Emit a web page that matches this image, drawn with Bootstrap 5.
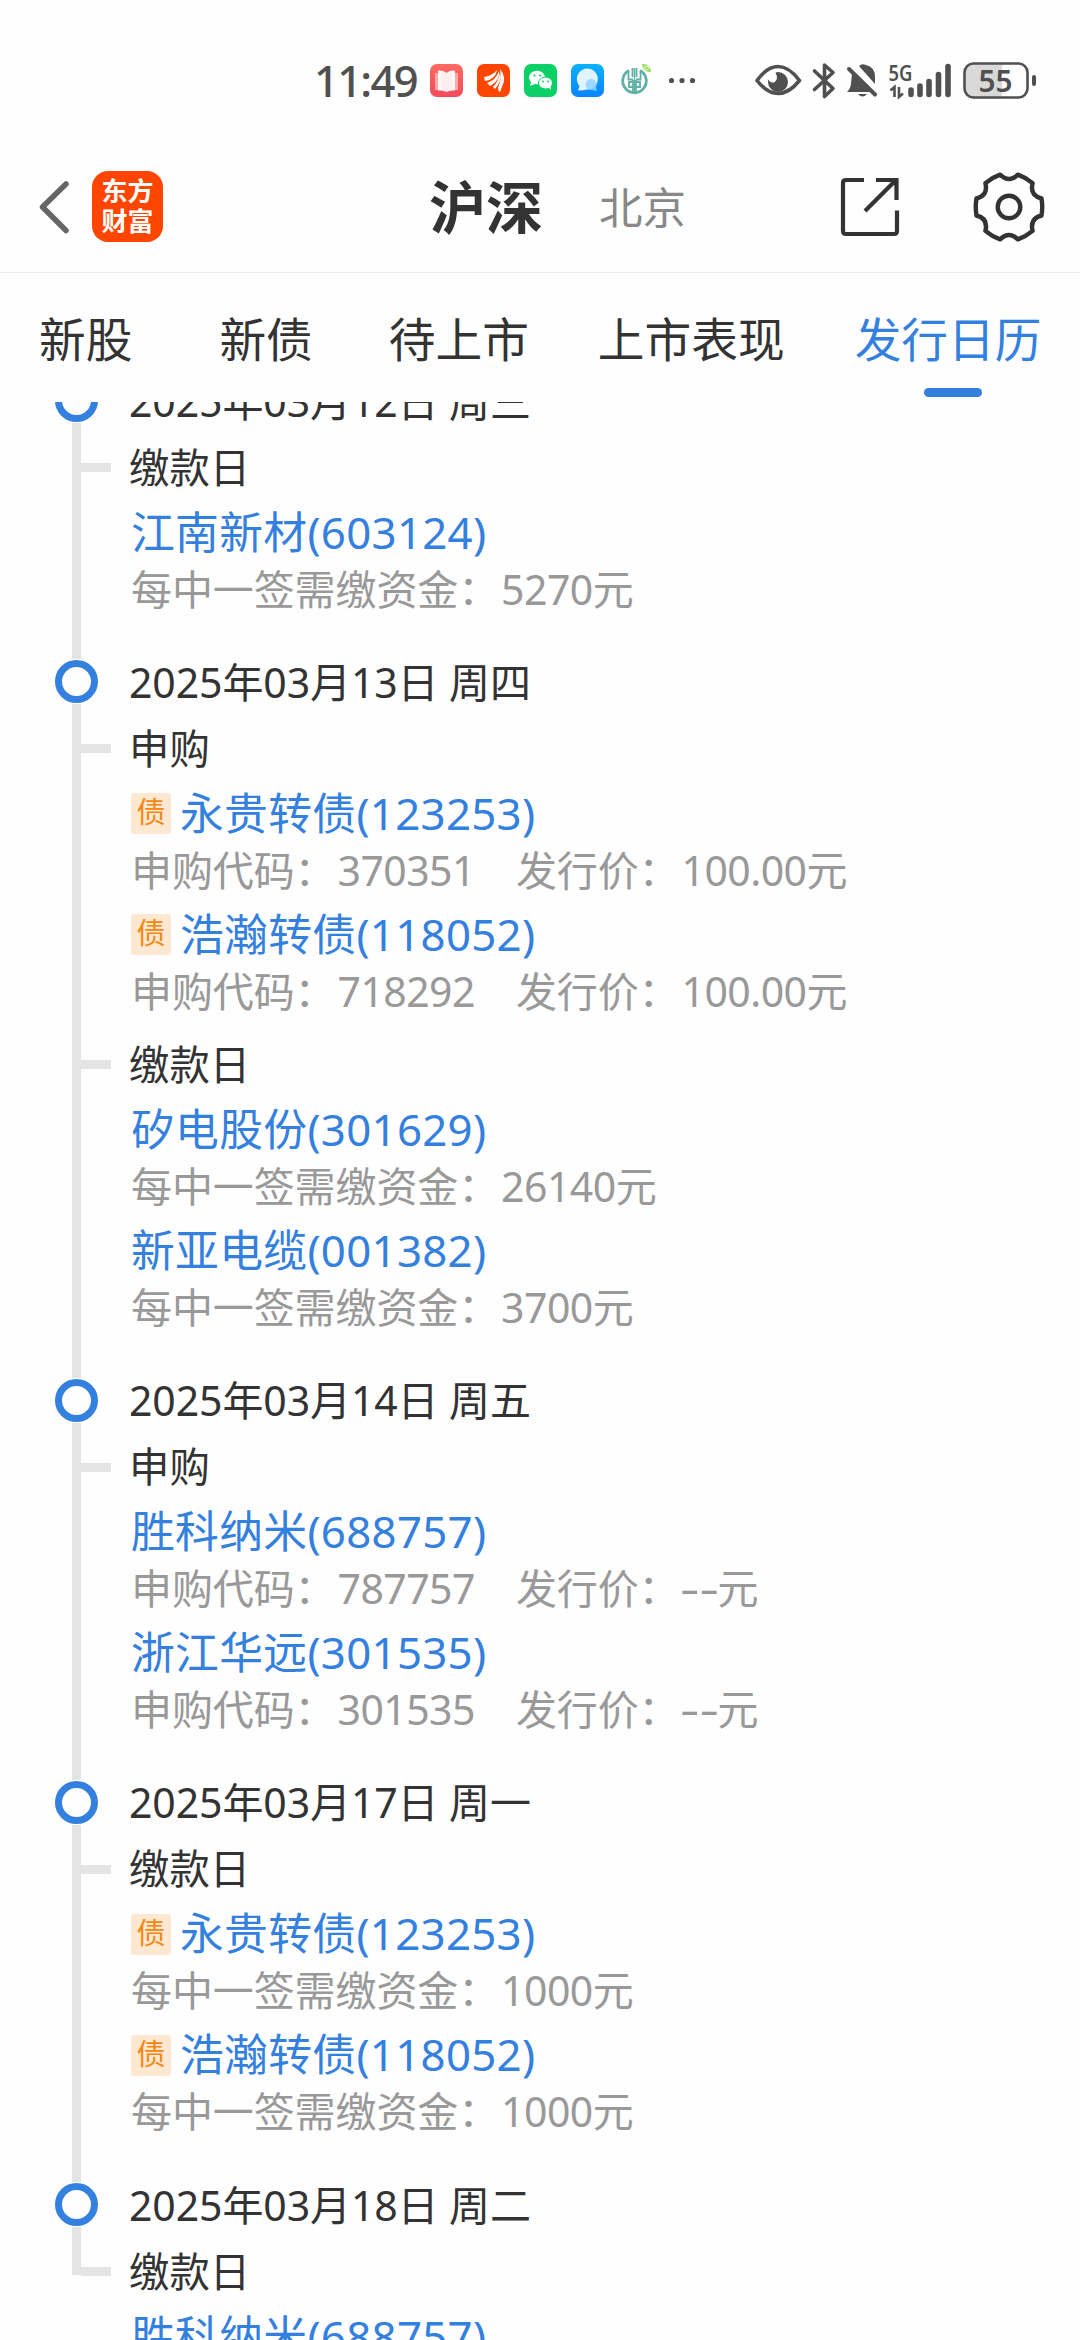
<!DOCTYPE html>
<html lang="zh-CN">
<head>
<meta charset="utf-8">
<meta name="viewport" content="width=device-width, initial-scale=1">
<title>发行日历</title>
<link href="https://cdn.jsdelivr.net/npm/bootstrap@5.3.0/dist/css/bootstrap.min.css" rel="stylesheet">
<style>
  :root { --ink: #333; --sub: #999; --brand: #3480de; --rail: #e4e4e4; }
  html, body { height: 2340px; overflow: hidden; }
  body { width: 1080px; background: #fefefe; color: var(--ink); font-family: "Noto Sans", "Noto Sans CJK SC", sans-serif; }
  svg { display: block; flex: none; }
  .statusbar { height: 150px; padding: 10px 44px 0 314px; color: #505050; }
  .clock { font-size: 43.5px; line-height: 60px; width: 116px; letter-spacing: -1.7px; font-weight: 500; }
  .topbar { height: 123px; border-bottom: 1px solid #ebebeb; padding: 0 34px 8px 38px; }
  .app-logo { width: 71px; height: 71px; border-radius: 16px; background: #ff4500; color: #fff; font: 700 26px/30px "Noto Sans CJK SC", sans-serif; margin: -2px 0 0 22px; padding-bottom: 2px; }
  .market-on { font-size: 57px; font-weight: 700; line-height: 70px; margin-left: 266px; }
  .market-off { font-size: 43.5px; line-height: 60px; color: #888; margin-left: 56px; }
  .gear { margin-left: 72px; }
  .tabs-row { height: 129px; padding: 0 39px; font-size: 46.7px; line-height: 60px; }
  .tabs-row a { color: var(--ink); text-decoration: none; padding-top: 36px; height: 129px; white-space: nowrap; }
  .tabs-row a.on { color: var(--brand); }
  .tab-line { width: 58px; height: 9px; border-radius: 5px; background: var(--brand); margin: 19px 0 0 69px; }
  .viewport-list { height: 1938px; overflow: hidden; }
  .timeline { margin-top: -34.5px; }
  .day { padding-left: 55px; }
  .rail { width: 43px; flex: none; }
  .rail i { width: 9px; background: var(--rail); }
  .rail .cap { height: 10.5px; }
  .rail b { width: 43px; height: 43px; border: 7px solid var(--brand); border-radius: 50%; margin: 1px 0; }
  .rail .stem { flex: 1; }
  .day.last .rail .stem { flex: none; height: 47.5px; }
  .day-body { padding-bottom: 26.3px; }
  .date { height: 66px; line-height: 66px; font-size: 41px; padding-left: 31px; white-space: pre; letter-spacing: -.1px; }
  .kind { height: 68px; font-size: 40.4px; line-height: 68px; }
  .kind::before { content: ""; width: 30px; height: 9px; background: var(--rail); margin: 0 18px 0 -17px; }
  .issue + .kind { margin-top: 6px; }
  .issue { height: 121px; padding-left: 33px; white-space: nowrap; }
  .issue-name { height: 64px; line-height: 61px; padding-bottom: 3px; font-size: 43.8px; color: var(--brand); letter-spacing: .3px; }
  .bond { width: 40px; height: 41px; border-radius: 3px; background: #ffe8d1; color: #f5870f; font-size: 29px; line-height: 38px; text-align: center; margin: 1px 9px 0 0; letter-spacing: 0; }
  .issue-info { height: 50px; line-height: 47px; font-size: 41px; color: var(--sub); letter-spacing: -.1px; }
  .num { margin-left: 2px; letter-spacing: -.55px; }
  .issue-info .price { margin-left: 41px; }
  .unset { display: inline-block; width: 38px; transform: scaleX(1.48); transform-origin: 0 50%; }
</style>
<script src="https://cdn.jsdelivr.net/npm/bootstrap@5.3.0/dist/js/bootstrap.bundle.min.js"></script>
</head>
<body>
<div class="statusbar d-flex align-items-center">
  <div class="clock">11:49</div>
  <svg width="270" height="40" viewBox="430 60 270 40">
    <defs>
      <linearGradient id="g1" x1="0" y1="0" x2="0" y2="1"><stop stop-color="#ff6a62"/><stop offset="1" stop-color="#f64a5c"/></linearGradient>
      <linearGradient id="g2" x1="0" y1="0" x2="0" y2="1"><stop stop-color="#0bb1ff"/><stop offset="1" stop-color="#0a84ff"/></linearGradient>
    </defs>
    <rect x="430" y="64" width="33" height="33" rx="7" fill="url(#g1)"/>
    <path d="M435 73h6v17h-6zM452 73h6v17h-6z" fill="#ffa9a9"/>
    <path d="M438 70.500q6-.5 8.500 2.500 2.500-3 8.500-2.500v20q-6-.5-8.500 1.500-2.500-2-8.500-1.500z" fill="#fff" opacity=".9"/>
    <rect x="477" y="64" width="33" height="33" rx="7" fill="#ff4500"/>
    <path d="M484 77q8-1 13-7-1 9-12 11zM487 83q9-3 12-12 2 9-9 15zM500 69q7 8 2 18l-2 5q-2-1-2-4 4-9 2-19zM493 87q6-6 7-15 2 10-5 17z" fill="#fff"/>
    <rect x="524" y="64" width="33" height="33" rx="7" fill="#0bd066"/>
    <ellipse cx="537" cy="77.500" rx="8" ry="6.800" fill="#fff"/><path d="M531 82l-1 4 5-2z" fill="#fff"/>
    <ellipse cx="545.500" cy="83" rx="7" ry="6" fill="#fff" stroke="#0bd066" stroke-width="1"/><path d="M548 87l3 3-.5-4z" fill="#fff"/>
    <g fill="#0bd066"><circle cx="534.500" cy="75.500" r="1.100"/><circle cx="540" cy="75.500" r="1.100"/><circle cx="543" cy="81.500" r=".9"/><circle cx="548" cy="81.500" r=".9"/></g>
    <rect x="571" y="64" width="33" height="33" rx="7" fill="url(#g2)"/>
    <path d="M578 90.500l1.500-4.500a10.500 10.500 0 1 1 7.500 3.500q-3 1-9 1z" fill="#e2f4ff"/>
    <path d="M597 90.500l-1-3.500a5.500 5.500 0 1 0-4 3q2 .5 5 .5z" fill="#8fd2ff" opacity=".85"/>
    <path d="M629 70.500a11.800 11.800 0 1 0 11 0" fill="none" stroke="#5fb0a5" stroke-width="2.800"/>
    <path d="M634.500 68v25" stroke="#5fb0a5" stroke-width="1.400"/>
    <path d="M628.500 71v8.500h4.500M640.500 71v8.500h-4.500M632.500 68v9M636.500 68v9M633 82h-4v5h4M636 82h4v5h-4M633 80v12M636 80v12" fill="none" stroke="#5fb0a5" stroke-width="1.800"/>
    <path d="M642 64q8-1 9 8-8 1-9-8z" fill="#9bdc5c"/><circle cx="646.500" cy="68" r="2" fill="none" stroke="#fff" stroke-width=".8"/>
    <g fill="#505050"><circle cx="671.500" cy="80.500" r="2.600"/><circle cx="682" cy="80.500" r="2.600"/><circle cx="692.500" cy="80.500" r="2.600"/></g>
  </svg>
  <svg class="ms-auto" width="284" height="40" viewBox="752 60 284 40" fill="none" stroke="#505050">
    <path d="M757 80.500Q767 66.500 778 66.500T799.500 80.500Q789 93.500 778 93.500T757 80.500z" stroke-width="3.600" stroke-linejoin="round"/>
    <path d="M778 72a10 10 0 1 1-10 10l.3-2.500q2.500 4.500 6.500 2.500 4-2.500.7-9.500z" fill="#505050" stroke="none"/>
    <path d="M814.500 71L833 88.500 824.500 96.500V65L833 72.500 814.500 89.500" stroke-width="3.600" stroke-linejoin="round" stroke-linecap="round"/>
    <path d="M852 74L870.500 92H847q4-4 4-9zM859 66q3-3 7-1 9 2 9 12v7z" fill="#505050" stroke="none"/>
    <path d="M858 94h9q-4.500 5-9 0z" fill="#505050" stroke="none"/>
    <path d="M849 69L875 94.500" stroke-width="4" stroke-linecap="round"/>
    <text x="888.500" y="80.500" font-size="21.500" font-weight="600" textLength="24" lengthAdjust="spacingAndGlyphs" fill="#505050" stroke="none" font-family="Noto Sans">5G</text>
    <path d="M890.500 90.500l4-3.500v10M899 87v10l4-3.500" stroke-width="2.600"/>
    <g stroke-width="5.600" stroke-linecap="round"><path d="M911 90v4.500M920 86v8.500M929 81.500v13M938.500 74.500v20M948 66.500v28"/></g>
    <path d="M974 64h28v33h-28q-9 0-9-9V73q0-9 9-9z" fill="#d9d9d9" stroke="none"/>
    <rect x="964.500" y="63.500" width="63" height="34" rx="9" stroke-width="2.600"/>
    <path d="M1034 77v7" stroke-width="4" stroke-linecap="round"/>
    <text x="995.500" y="91.500" font-size="30.500" font-weight="600" text-anchor="middle" textLength="34" lengthAdjust="spacingAndGlyphs" fill="#505050" stroke="none" font-family="Noto Sans">55</text>
  </svg>
</div>
<header class="topbar d-flex align-items-center">
  <svg width="32" height="56" viewBox="38 179 32 56" fill="none" stroke="#666" stroke-width="5.500" stroke-linecap="round" stroke-linejoin="round"><path d="M66 184L42.500 207 66 230.500"/></svg>
  <div class="app-logo d-flex flex-column align-items-center justify-content-center"><span>东方</span><span>财富</span></div>
  <div class="market-on">沪深</div>
  <div class="market-off">北京</div>
  <svg class="ms-auto" width="60" height="60" viewBox="840 177 60 60" fill="none" stroke="#333" stroke-width="4.200"><path d="M864 180h-18q-3 0-3 3v48q0 3 3 3h48q3 0 3-3v-20.500M876 180h20.500v20M865 211l31-31"/><path d="M888 179h10v10z" fill="#333" stroke="none"/></svg>
  <svg class="gear" width="74" height="74" viewBox="-37 -37 74 74" fill="none" stroke="#333" stroke-width="4.400" stroke-linejoin="round">
    <path d="M32.500 -8.500Q34 0 32.500 8.500Q20.500 11.500 23.600 23.900Q17 29.500 8.900 32.400Q0 23.500-8.900 32.400Q-17 29.500-23.600 23.900Q-20.500 11.500-32.500 8.500Q-34 0-32.500-8.500Q-20.500-11.500-23.600-23.900Q-17-29.500-8.900-32.400Q0-23.500 8.900-32.400Q17-29.500 23.600-23.900Q20.500-11.500 32.500-8.500z"/>
    <circle r="11.300"/>
  </svg>
</header>
<nav class="tabs-row d-flex">
  <a href="#">新股</a>
  <a href="#" style="margin-left:87px">新债</a>
  <a href="#" style="margin-left:76px">待上市</a>
  <a href="#" style="margin-left:69px">上市表现</a>
  <a href="#" class="on" style="margin-left:70px">发行日历<div class="tab-line"></div></a>
</nav>
<main class="viewport-list">
 <div class="timeline">
  <section class="day d-flex">
    <div class="rail d-flex flex-column align-items-center"><i class="cap"></i><b></b><i class="stem"></i></div>
    <div class="day-body">
      <div class="date">2025年03月12日 周三</div>
      <div class="kind d-flex align-items-center">缴款日</div>
      <div class="issue"><div class="issue-name d-flex align-items-center">江南新材(603124)</div><div class="issue-info">每中一签需缴资金：<span class="num">5270</span>元</div></div>
    </div>
  </section>
  <section class="day d-flex">
    <div class="rail d-flex flex-column align-items-center"><i class="cap"></i><b></b><i class="stem"></i></div>
    <div class="day-body">
      <div class="date">2025年03月13日 周四</div>
      <div class="kind d-flex align-items-center">申购</div>
      <div class="issue"><div class="issue-name d-flex align-items-center"><span class="bond">债</span>永贵转债(123253)</div><div class="issue-info">申购代码：<span class="num">370351</span><span class="price">发行价：<span class="num">100.00</span>元</span></div></div>
      <div class="issue"><div class="issue-name d-flex align-items-center"><span class="bond">债</span>浩瀚转债(118052)</div><div class="issue-info">申购代码：<span class="num">718292</span><span class="price">发行价：<span class="num">100.00</span>元</span></div></div>
      <div class="kind d-flex align-items-center">缴款日</div>
      <div class="issue"><div class="issue-name d-flex align-items-center">矽电股份(301629)</div><div class="issue-info">每中一签需缴资金：<span class="num">26140</span>元</div></div>
      <div class="issue"><div class="issue-name d-flex align-items-center">新亚电缆(001382)</div><div class="issue-info">每中一签需缴资金：<span class="num">3700</span>元</div></div>
    </div>
  </section>
  <section class="day d-flex">
    <div class="rail d-flex flex-column align-items-center"><i class="cap"></i><b></b><i class="stem"></i></div>
    <div class="day-body">
      <div class="date">2025年03月14日 周五</div>
      <div class="kind d-flex align-items-center">申购</div>
      <div class="issue"><div class="issue-name d-flex align-items-center">胜科纳米(688757)</div><div class="issue-info">申购代码：<span class="num">787757</span><span class="price">发行价：<span class="unset">--</span>元</span></div></div>
      <div class="issue"><div class="issue-name d-flex align-items-center">浙江华远(301535)</div><div class="issue-info">申购代码：<span class="num">301535</span><span class="price">发行价：<span class="unset">--</span>元</span></div></div>
    </div>
  </section>
  <section class="day d-flex">
    <div class="rail d-flex flex-column align-items-center"><i class="cap"></i><b></b><i class="stem"></i></div>
    <div class="day-body">
      <div class="date">2025年03月17日 周一</div>
      <div class="kind d-flex align-items-center">缴款日</div>
      <div class="issue"><div class="issue-name d-flex align-items-center"><span class="bond">债</span>永贵转债(123253)</div><div class="issue-info">每中一签需缴资金：<span class="num">1000</span>元</div></div>
      <div class="issue"><div class="issue-name d-flex align-items-center"><span class="bond">债</span>浩瀚转债(118052)</div><div class="issue-info">每中一签需缴资金：<span class="num">1000</span>元</div></div>
    </div>
  </section>
  <section class="day last d-flex">
    <div class="rail d-flex flex-column align-items-center"><i class="cap"></i><b></b><i class="stem"></i></div>
    <div class="day-body">
      <div class="date">2025年03月18日 周二</div>
      <div class="kind d-flex align-items-center">缴款日</div>
      <div class="issue"><div class="issue-name d-flex align-items-center">胜科纳米(688757)</div></div>
    </div>
  </section>
 </div>
</main>
</body>
</html>
